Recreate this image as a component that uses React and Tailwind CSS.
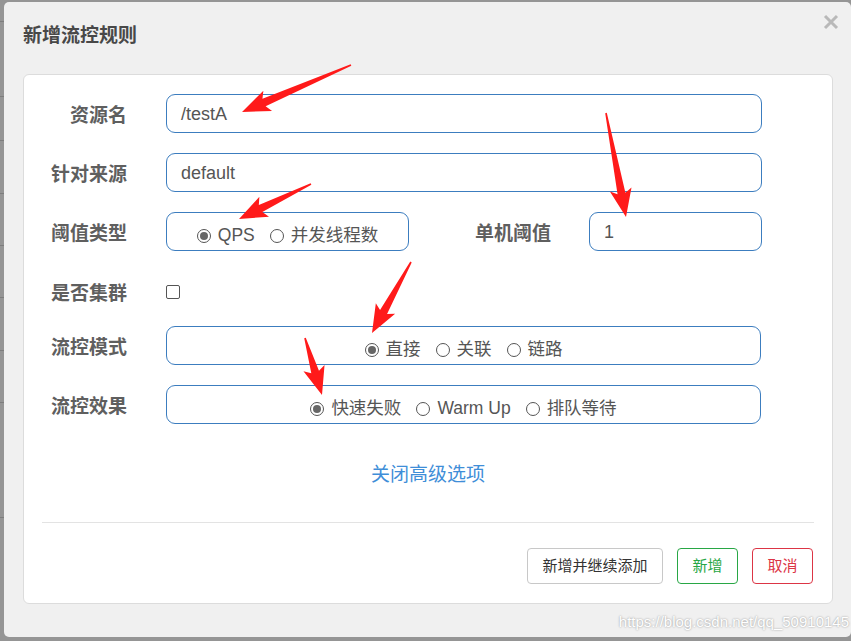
const font = { fontFamily: '"Liberation Sans", "Noto Sans CJK SC", sans-serif' };

const arrows = [
  [351, 65, 242, 112],
  [606, 113, 626, 217],
  [311, 184, 239, 219],
  [411, 262, 372, 333],
  [305, 338, 322, 395],
];

function arrowPoints([tx, ty, px, py]) {
  const len = Math.hypot(px - tx, py - ty);
  const dx = (px - tx) / len;
  const dy = (py - ty) / len;
  const nx = -dy;
  const ny = dx;
  const H = 24;
  const W = 11;
  const bx = px - dx * H;
  const by = py - dy * H;
  const bbx = px - dx * (H + 4);
  const bby = py - dy * (H + 4);
  const pts = [
    [tx + nx * 0.8, ty + ny * 0.8],
    [bx + nx * 4, by + ny * 4],
    [bbx + nx * W, bby + ny * W],
    [px, py],
    [bbx - nx * W, bby - ny * W],
    [bx - nx * 4, by - ny * 4],
    [tx - nx * 0.8, ty - ny * 0.8],
  ];
  return pts.map((p) => p.join(",")).join(" ");
}

const Radio = ({ checked, label }) => (
  <span className="flex items-center gap-[7px]">
    <span className="w-[14px] h-[14px] rounded-full border border-[#555] flex items-center justify-center bg-white">
      {checked && <span className="w-[8px] h-[8px] rounded-full bg-[#666]" />}
    </span>
    <span>{label}</span>
  </span>
);

const Label = ({ children, className = "w-[103px]" }) => (
  <div className={`${className} pt-[6px] text-right font-bold text-[19px] text-[#5f5f5f] shrink-0`}>{children}</div>
);

const Input = ({ value, className }) => (
  <div className={`${className} h-[39px] border border-[#3c7dbf] rounded-[9px] flex items-center pl-[14px] pt-[2px] text-[18px] text-[#555] bg-white`}>
    {value}
  </div>
);

const RadioBox = ({ className, items }) => (
  <div className={`${className} h-[39px] border border-[#3c7dbf] rounded-[9px] flex items-center justify-center gap-[15px] pt-[8px] text-[17.5px] text-[#555] bg-white`}>
    {items.map((it) => (
      <Radio key={it[0]} label={it[0]} checked={it[1]} />
    ))}
  </div>
);

const backdropLines = [21, 96, 140, 193, 245, 297, 350, 402, 517];

export default function App() {
  return (
    <div className="relative w-[851px] h-[641px] bg-[#959595] overflow-hidden" style={font}>
      {/* backdrop table */}
      <div className="absolute left-0 top-0 w-[4px] h-full">
        {backdropLines.map((y) => (
          <div key={y} className="absolute left-0 w-[4px] h-px bg-[#7d7d7d]" style={{ top: y }} />
        ))}
      </div>

      {/* modal */}
      <div className="absolute left-[4px] top-[2px] w-[847px] h-[635px] bg-[#f0f0f0] rounded-[5px]">
        <div className="h-[72px] flex justify-between items-start pl-[19px] pr-[12px]">
          <h1 className="pt-[21px] leading-[26px] font-bold text-[19px] text-[#484848]">新增流控规则</h1>
          <svg width="16" height="16" viewBox="0 0 16 16" className="mt-[12px]">
            <path d="M2 2 L14 14 M14 2 L2 14" stroke="#b9b9b9" strokeWidth="3" />
          </svg>
        </div>

        <div className="ml-[19px] w-[810px] h-[530px] bg-white border border-[#dcdcdc] rounded-[6px] pt-[19px] flex flex-col">
          <div className="flex items-center">
            <Label>资源名</Label>
            <Input value="/testA" className="ml-[39px] w-[596px]" />
          </div>
          <div className="flex items-center mt-[20px]">
            <Label>针对来源</Label>
            <Input value="default" className="ml-[39px] w-[596px]" />
          </div>
          <div className="flex items-center mt-[20px]">
            <Label>阈值类型</Label>
            <RadioBox className="ml-[39px] w-[243px] gap-[14px]" items={[["QPS", true], ["并发线程数", false]]} />
            <Label className="w-[142px]">单机阈值</Label>
            <Input value="1" className="ml-[38px] w-[173px]" />
          </div>
          <div className="flex items-center mt-[20px] h-[40px]">
            <Label>是否集群</Label>
            <span className="ml-[39px] mt-[1px] w-[14px] h-[14px] border-[1.5px] border-[#555] rounded-[2px]" />
          </div>
          <div className="flex items-center mt-[15px]">
            <Label>流控模式</Label>
            <RadioBox className="ml-[39px] w-[595px]" items={[["直接", true], ["关联", false], ["链路", false]]} />
          </div>
          <div className="flex items-center mt-[20px]">
            <Label>流控效果</Label>
            <RadioBox className="ml-[39px] w-[595px]" items={[["快速失败", true], ["Warm Up", false], ["排队等待", false]]} />
          </div>

          <div className="mt-[38px] text-center text-[19px] leading-[26px] text-[#3f8ed8]">关闭高级选项</div>

          <div className="mt-[34px] mx-[18px] h-px bg-[#e3e3e3]" />

          <div className="mt-[25px] mr-[19px] flex justify-end gap-[14px] text-[15px]">
            <button className="w-[136px] h-[36px] border border-[#c8c8c8] rounded-[4px] text-[#333] bg-white">新增并继续添加</button>
            <button className="w-[61px] h-[36px] border border-[#28a745] rounded-[4px] text-[#28a745] bg-white">新增</button>
            <button className="w-[61px] h-[36px] border border-[#dc3545] rounded-[4px] text-[#dc3545] bg-white">取消</button>
          </div>
        </div>
      </div>

      {/* annotation arrows */}
      <svg className="absolute left-0 top-0 pointer-events-none" width="851" height="641">
        {arrows.map((a, i) => (
          <polygon key={i} points={arrowPoints(a)} fill="#ff1a1a" />
        ))}
      </svg>

      {/* watermark */}
      <div
        className="absolute right-[2px] top-[611px] text-[15px] text-white"
        style={{ textShadow: "0 0 2px #8a8a8a" }}
      >
        https://blog.csdn.net/qq_50910145
      </div>
    </div>
  );
}
